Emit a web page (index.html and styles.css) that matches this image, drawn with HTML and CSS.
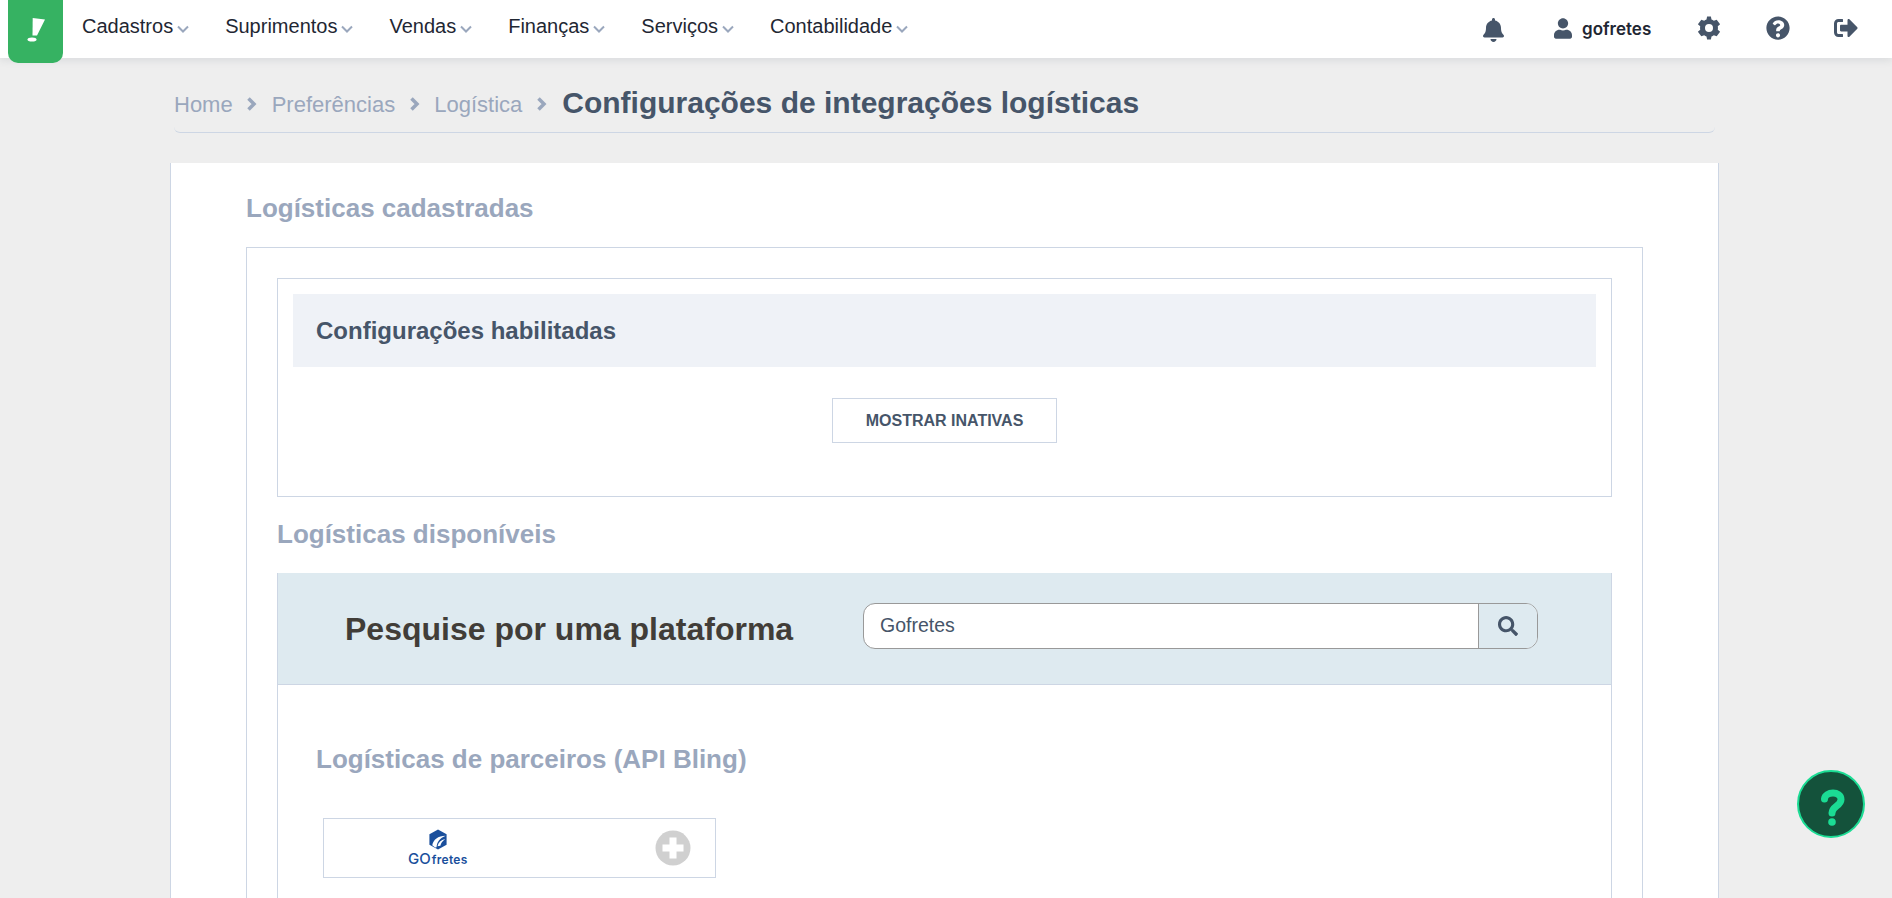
FILE: index.html
```html
<!DOCTYPE html>
<html lang="pt-BR">
<head>
<meta charset="utf-8">
<title>Configurações de integrações logísticas</title>
<link rel="stylesheet" href="styles.css">
</head>
<body>
<header class="navbar">
  <a class="logo"><svg viewBox="0 0 20 28" width="20" height="28"><path d="M6.700 3 L19 4.500 L11 20.500 L6.500 20.500 Z" fill="#fff"/><ellipse cx="6" cy="24.500" rx="4.500" ry="2.100" fill="#fff"/></svg></a>
  <nav class="menu">
    <a class="menu-item">Cadastros<svg class="caret" viewBox="0 0 12 8"><path d="M1 1.500 L6 6.500 L11 1.500"/></svg></a>
    <a class="menu-item">Suprimentos<svg class="caret" viewBox="0 0 12 8"><path d="M1 1.500 L6 6.500 L11 1.500"/></svg></a>
    <a class="menu-item">Vendas<svg class="caret" viewBox="0 0 12 8"><path d="M1 1.500 L6 6.500 L11 1.500"/></svg></a>
    <a class="menu-item">Finanças<svg class="caret" viewBox="0 0 12 8"><path d="M1 1.500 L6 6.500 L11 1.500"/></svg></a>
    <a class="menu-item">Serviços<svg class="caret" viewBox="0 0 12 8"><path d="M1 1.500 L6 6.500 L11 1.500"/></svg></a>
    <a class="menu-item">Contabilidade<svg class="caret" viewBox="0 0 12 8"><path d="M1 1.500 L6 6.500 L11 1.500"/></svg></a>
  </nav>
  <div class="tools">
    <svg class="tool bell" viewBox="0 0 448 512"><path d="M224 512c35.300 0 64-28.700 64-64H160c0 35.300 28.700 64 64 64zm215.400-149.700c-19.300-20.800-55.500-52-55.500-154.300 0-77.700-54.500-139.900-127.900-155.200V32c0-17.700-14.300-32-32-32s-32 14.300-32 32v20.800C118.600 68.100 64.100 130.300 64.100 208c0 102.300-36.200 133.500-55.500 154.300-6 6.400-8.700 14.100-8.600 21.700.1 16.400 13 32 32.100 32h383.800c19.100 0 32-15.600 32.100-32 .1-7.600-2.600-15.300-8.600-21.700z"/></svg>
    <div class="user">
      <svg class="tool person" viewBox="0 0 448 512"><path d="M224 256c70.700 0 128-57.300 128-128S294.700 0 224 0 96 57.300 96 128s57.300 128 128 128zm89.600 32h-16.700c-22.200 10.200-46.900 16-72.900 16s-50.600-5.800-72.900-16h-16.700C60.200 288 0 348.200 0 422.400V464c0 26.500 21.500 48 48 48h352c26.500 0 48-21.500 48-48v-41.600c0-74.200-60.200-134.400-134.400-134.400z"/></svg>
      <span class="user-name">gofretes</span>
    </div>
    <svg class="tool gear" viewBox="0 0 24 24"><path fill-rule="evenodd" d="M13.900 0.500 L14.500 3.500 A9 9 0 0 1 16.800 4.800 L19.700 3.800 L23.100 8.200 L20.800 10.300 A9 9 0 0 1 20.800 13.700 L23.100 15.800 L19.700 20.200 L16.800 19.200 A9 9 0 0 1 14.500 20.500 L13.900 23.500 L10.100 23.500 L9.500 20.500 A9 9 0 0 1 7.200 19.200 L4.300 20.200 L0.900 15.800 L3.200 13.700 A9 9 0 0 1 3.200 10.300 L0.900 8.200 L4.300 3.800 L7.200 4.800 A9 9 0 0 1 9.500 3.500 L10.100 0.500 Z M12 8 A4 4 0 1 0 12 16 A4 4 0 1 0 12 8 Z"/></svg>
    <svg class="tool circle-q" viewBox="0 0 512 512"><path d="M504 256c0 137-111 248-248 248S8 393 8 256 119 8 256 8s248 111 248 248zM262.700 90c-54.500 0-89.300 23-116.500 63.800-3.500 5.300-2.400 12.400 2.700 16.300l34.700 26.300c5.200 3.900 12.600 3 16.700-2.100 17.900-22.700 30.100-35.800 57.300-35.800 20.400 0 45.700 13.100 45.700 32.900 0 15-12.400 22.700-32.500 34C247.100 238.500 216 258 216 304v8c0 6.600 5.400 12 12 12h56c6.600 0 12-5.400 12-12v-2.700c0-31.800 93-33.100 93-119.300 0-64.900-67.300-100-126.300-100zM256 368c-24.300 0-44 19.700-44 44s19.700 44 44 44 44-19.700 44-44-19.700-44-44-44z"/></svg>
    <svg class="tool signout" viewBox="0 0 512 512"><path d="M497 273L329 441c-15 15-41 4.500-41-17v-96H152c-13.300 0-24-10.700-24-24v-96c0-13.300 10.700-24 24-24h136V88c0-21.400 25.900-32 41-17l168 168c9.300 9.400 9.300 24.600 0 34zM192 436v-40c0-6.600-5.400-12-12-12H96c-17.700 0-32-14.300-32-32V160c0-17.700 14.300-32 32-32h84c6.600 0 12-5.400 12-12V76c0-6.600-5.400-12-12-12H96c-53 0-96 43-96 96v192c0 53 43 96 96 96h84c6.600 0 12-5.400 12-12z"/></svg>
  </div>
</header>

<main class="page">
  <div class="breadcrumb">
    <a class="crumb">Home</a>
    <svg class="sep" viewBox="0 0 10 16"><path d="M1.500 2.500 L7 8 L1.500 13.500"/></svg>
    <a class="crumb">Preferências</a>
    <svg class="sep" viewBox="0 0 10 16"><path d="M1.500 2.500 L7 8 L1.500 13.500"/></svg>
    <a class="crumb">Logística</a>
    <svg class="sep" viewBox="0 0 10 16"><path d="M1.500 2.500 L7 8 L1.500 13.500"/></svg>
    <h1 class="page-title">Configurações de integrações logísticas</h1>
  </div>

  <section class="card">
    <h2 class="section-title first">Logísticas cadastradas</h2>
    <div class="outer-box">
      <div class="enabled-box">
        <div class="enabled-head">Configurações habilitadas</div>
        <div class="enabled-actions"><button class="btn-inactive">MOSTRAR INATIVAS</button></div>
      </div>
      <h2 class="section-title available">Logísticas disponíveis</h2>
      <div class="platforms">
        <div class="search-band">
          <div class="search-label">Pesquise por uma plataforma</div>
          <div class="search-group">
            <div class="search-input">Gofretes</div>
            <div class="search-btn"><svg viewBox="0 0 512 512"><path d="M505 442.700L405.300 343c-4.500-4.500-10.600-7-17-7H372c27.600-35.300 44-79.700 44-128C416 93.100 322.900 0 208 0S0 93.100 0 208s93.100 208 208 208c48.300 0 92.700-16.400 128-44v16.300c0 6.400 2.500 12.500 7 17l99.700 99.700c9.400 9.400 24.600 9.400 33.900 0l28.300-28.300c9.400-9.400 9.400-24.600.1-34zM208 336c-70.700 0-128-57.200-128-128 0-70.700 57.200-128 128-128 70.700 0 128 57.200 128 128 0 70.700-57.200 128-128 128z"/></svg></div>
          </div>
        </div>
        <div class="partners">
          <h2 class="section-title partners-title">Logísticas de parceiros (API Bling)</h2>
          <div class="partner-card">
            <div class="partner-logo">
              <svg class="hex" viewBox="0 0 20 22"><path d="M10 0.500 L19 5.500 L19 16.500 L10 21.500 L1 16.500 L1 5.500 Z" fill="#1a4f9c"/><path d="M4 17 C5 11 10 7 18 7 C12 9.500 9 13 8.500 19 L7 19.500 Z" fill="#fff"/><path d="M9.500 18 C10.500 14 13 11.500 17.500 10.500 C14.500 13 13 15 12.500 17.500 Z" fill="#fff"/></svg>
              <span class="wordmark"><span class="go">GO</span>fretes</span>
            </div>
            <svg class="plus" viewBox="0 0 36 36"><circle cx="18" cy="18" r="17.500" fill="#d0d0d0"/><path d="M14.500 7.500h7v7h7v7h-7v7h-7v-7h-7v-7h7z" fill="#fff"/></svg>
          </div>
        </div>
      </div>
    </div>
  </section>
</main>

<button class="help-fab" aria-label="Ajuda"><svg viewBox="0 0 64 64"><path class="help-curve" d="M34.500 27 C35 19.500 51 18.500 51 27.500 C51 34 42 34 42 41"/><circle class="help-dot" cx="42" cy="50" r="3.800"/></svg></button>
</body>
</html>
```

FILE: styles.css
```css
* { box-sizing: border-box; }
html, body { margin: 0; height: 100%; overflow: hidden; }
body {
  background: #eeeeee;
  font-family: "Liberation Sans", Arial, sans-serif;
  color: #3f4d5f;
}
.navbar {
  height: 58px;
  background: #fff;
  display: flex;
  align-items: center;
  padding-left: 8px;
  box-shadow: 0 2px 8px rgba(60, 70, 90, 0.12);
  position: relative;
}
.logo {
  width: 55px;
  height: 63px;
  align-self: flex-start;
  background: #36b262;
  border-radius: 0 0 10px 10px;
  display: flex;
  align-items: center;
  justify-content: center;
  padding-bottom: 5px;
  flex: none;
}
.menu { display: flex; margin-left: 19px; gap: 35px; margin-top: -5px; }
.menu-item {
  display: flex;
  align-items: center;
  font-size: 20px;
  color: #1f2733;
  white-space: nowrap;
}
.caret { width: 12px; height: 8px; margin: 4px 1px 0 4px; fill: none; stroke: #9aa7bd; stroke-width: 2; }
.tools { margin-left: auto; display: flex; align-items: center; margin-right: 34px; }
.tool { fill: #465569; display: block; }
.bell { width: 21px; height: 24px; margin-top: 2px; }
.user { display: flex; align-items: center; margin-left: 50px; margin-top: -1px; }
.person { width: 18px; height: 21px; }
.user-name { font-family: Inter, sans-serif; font-weight: 600; font-size: 17px; color: #1f2733; margin-left: 10px; width: 68px; white-space: nowrap; }
.gear { width: 24px; height: 24px; margin-left: 47px; margin-top: -2px; }
.circle-q { width: 24px; height: 24px; margin-left: 45px; margin-top: -2px; }
.signout { width: 24px; height: 24px; margin-left: 44px; margin-top: -3px; }

.page { width: 1549px; margin-left: 170px; }
.breadcrumb {
  height: 75px;
  margin: 0 4px;
  border-bottom: 1px solid #cdd6e4;
  border-radius: 0 0 6px 6px;
  display: flex;
  align-items: center;
  padding-top: 20px;
}
.crumb { font-size: 22px; color: #9aa7bd; white-space: nowrap; }
.sep { width: 10px; height: 16px; margin: -2px 14.500px 0; fill: none; stroke: #9aa7bd; stroke-width: 3.500; flex: none; }
.page-title { margin: -4px 0 0 1px; font-size: 30px; font-weight: 700; color: #465569; white-space: nowrap; }

.card {
  margin-top: 30px;
  height: 800px;
  background: #fff;
  border: 1px solid #cdd6e4;
  border-top: 0;
  padding: 0 75px;
}
.section-title { margin: 0; font-size: 26px; font-weight: 700; color: #9aa7bd; line-height: 30px; }
.first { padding-top: 30px; height: 84px; }
.outer-box { border: 1px solid #cdd6e4; padding: 30px; height: 800px; }
.enabled-box { border: 1px solid #cdd6e4; height: 219px; padding: 15px; }
.enabled-head {
  height: 73px;
  background: #eff2f7;
  display: flex;
  align-items: center;
  padding-left: 23px;
  font-size: 24px;
  font-weight: 700;
  color: #465569;
}
.enabled-actions { display: flex; justify-content: center; padding-top: 31px; }
.btn-inactive {
  width: 225px;
  height: 45px;
  background: #fff;
  border: 1px solid #cdd6e4;
  font-family: inherit;
  font-size: 16px;
  font-weight: 700;
  color: #465569;
}
.available { padding-top: 22px; height: 76px; }
.platforms { border: 1px solid #cdd6e4; border-top: 0; height: 600px; }
.search-band {
  height: 112px;
  background: #deeaf0;
  border-bottom: 1px solid #cdd6e4;
  display: flex;
  align-items: center;
  padding: 0 0 6px 67px;
}
.search-label { font-size: 32px; font-weight: 700; color: #413d38; width: 518px; white-space: nowrap; padding-top: 7px; }
.search-group { width: 675px; height: 46px; display: flex; border: 1px solid #999; border-radius: 12px; overflow: hidden; background: #fff; }
.search-input { flex: 1; padding-left: 16px; font-size: 19.500px; line-height: 43px; color: #465569; }
.search-btn { width: 59px; background: #deeaf0; border-left: 1px solid #999; display: flex; align-items: center; justify-content: center; }
.search-btn svg { width: 20px; height: 20px; fill: #465569; }
.partners { padding: 59px 38px 0; }
.partners-title { height: 74px; }
.partner-card {
  margin-left: 7px;
  width: 393px;
  height: 60px;
  border: 1px solid #cdd6e4;
  display: flex;
  align-items: center;
  justify-content: space-between;
  padding: 0 24px 0 84px;
}
.partner-logo { display: flex; flex-direction: column; align-items: center; }
.hex { width: 20px; height: 21px; display: block; }
.wordmark { font-family: Inter, sans-serif; font-size: 12px; line-height: 14px; font-weight: 600; color: #1a4f9c; margin-top: 2px; white-space: nowrap; letter-spacing: 0.300px; }
.go { font-size: 15px; font-weight: 500; margin-right: 1px; letter-spacing: 0; }
.plus { width: 36px; height: 36px; }
.help-fab {
  position: absolute;
  left: 1797px;
  top: 770px;
  width: 68px;
  height: 68px;
  border-radius: 50%;
  background: #14523b;
  border: 2px solid #1bdc94;
  padding: 0;
}
.help-fab svg { display: block; width: 64px; height: 64px; margin-left: -9px; margin-top: 0; overflow: visible; }
.help-curve { fill: none; stroke: #1bdc94; stroke-width: 7; stroke-linecap: round; }
.help-dot { fill: #1bdc94; }
```
